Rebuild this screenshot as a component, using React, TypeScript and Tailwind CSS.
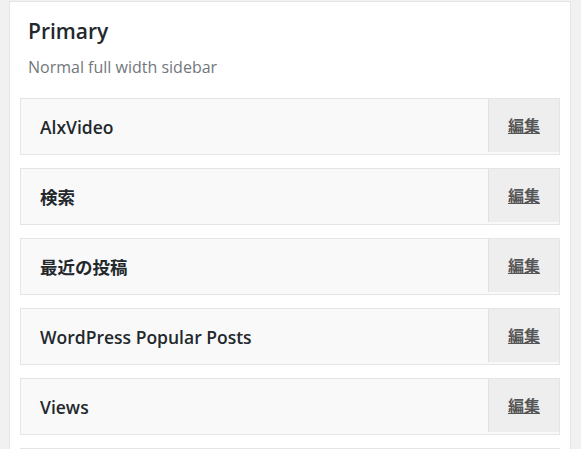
const widgets = ['AlxVideo', '検索', '最近の投稿', 'WordPress Popular Posts', 'Views', ''];

const font = 'font-["Open_Sans","Noto_Sans_CJK_JP",sans-serif]';

export default function App() {
  return (
    <div className={`min-h-[449px] h-[449px] overflow-hidden bg-[#f1f1f1] pl-[9px] pr-[10px] pt-[1px] ${font}`}>
      <div className="h-[460px] border border-[#e5e5e5] bg-white px-[10px]">
        <div className="px-[8px] pt-[15px]">
          <h2 className="text-[21px] leading-[28px] font-semibold text-[#23282d]">Primary</h2>
          <p className="mt-[11px] text-[16px] leading-[22px] text-[#72777c]">Normal full width sidebar</p>
        </div>
        <div className="mt-[20px] flex flex-col gap-[13px]">
          {widgets.map((w, i) => (
            <WidgetRow key={i} title={w} />
          ))}
        </div>
      </div>
    </div>
  );
}

function WidgetRow({ title }: { title: string }) {
  return (
    <div className="flex h-[57px] border border-[#e5e5e5] bg-[#f9f9f9]">
      <div className="flex flex-1 items-center pl-[19px] pt-[2px] text-[17.5px] font-semibold text-[#23282d]">
        {title}
      </div>
      <a className="flex h-[53px] w-[71px] items-center justify-center border-l border-[#e0e0e0] bg-[#eeeeee] text-[16px] font-semibold text-[#555] underline">
        {title ? '編集' : ''}
      </a>
    </div>
  );
}
